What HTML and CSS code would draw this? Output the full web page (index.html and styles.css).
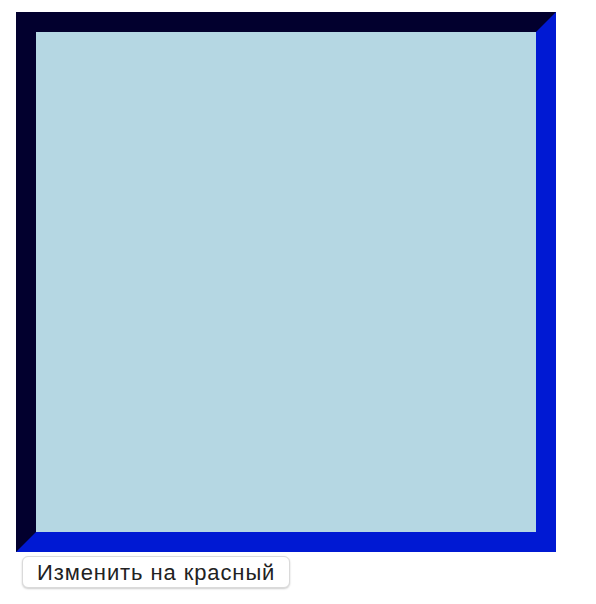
FILE: index.html
```html
<!DOCTYPE html>
<html lang="ru">
<head>
  <meta charset="UTF-8" />
  <title>Квадрат</title>
  <link rel="stylesheet" href="styles.css">
</head>
<body>
  <div class="box"></div>
  <button class="btn">Изменить на красный</button>
</body>
</html>
```

FILE: styles.css
```css
body { margin: 0; padding: 12px 16px; font-family: 'Liberation Sans', Arial, sans-serif; }
.box { width: 500px; height: 500px; background-color: #b5d7e3; border: 20px solid; border-color: #02002e #0019d3 #0019d3 #02002e; }
.btn { display: block; margin: 4px 0 0 6px; height: 32px; width: 268px; padding: 1px 0 0 14px; text-align: left; font-family: 'Liberation Sans', Arial, sans-serif; font-size: 22px; letter-spacing: 0.9px; color: #222; background: #fff; border: 1px solid #dadada; border-radius: 6px; box-shadow: 0 1px 2px rgba(0, 0, 0, 0.2); }
```
